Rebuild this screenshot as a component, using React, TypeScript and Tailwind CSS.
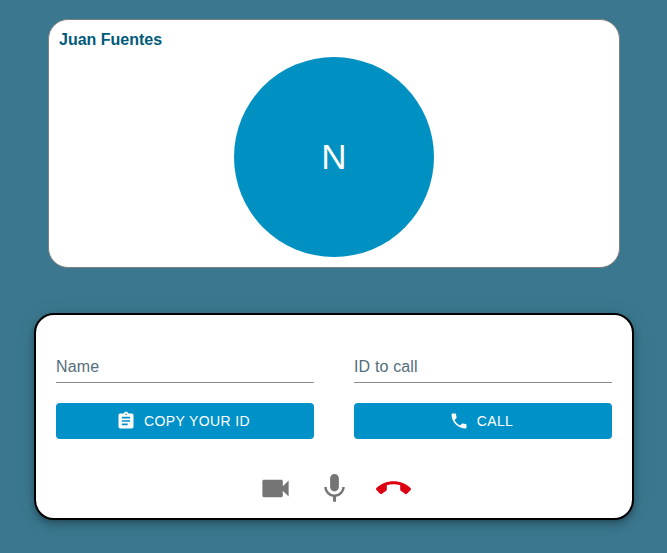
import type { ReactNode } from 'react';
import { MdAssignment, MdVideocam } from 'react-icons/md';

function Icon({ path, className = '' }: { path: string; className?: string }) {
  return (
    <svg viewBox="0 0 24 24" className={`size-[1em] fill-current ${className}`} aria-hidden="true">
      <path d={path} />
    </svg>
  );
}

const phonePath =
  'M6.62 10.79c1.44 2.83 3.76 5.14 6.59 6.59l2.2-2.2c.27-.27.67-.36 1.02-.24 1.12.37 2.33.57 3.57.57.55 0 1 .45 1 1V20c0 .55-.45 1-1 1-9.39 0-17-7.61-17-17 0-.55.45-1 1-1h3.5c.55 0 1 .45 1 1 0 1.25.2 2.45.57 3.57.11.35.03.74-.25 1.02l-2.2 2.2z';
const micPath =
  'M12 14c1.66 0 2.99-1.34 2.99-3L15 5c0-1.66-1.34-3-3-3S9 3.34 9 5v6c0 1.66 1.34 3 3 3zm5.3-3c0 3-2.54 5.1-5.3 5.1S6.7 14 6.7 11H5c0 3.41 2.72 6.23 6 6.72V21h2v-3.28c3.28-.48 6-3.3 6-6.72h-1.7z';
const callEndPath =
  'M12 9c-1.6 0-3.15.25-4.6.72v3.1c0 .39-.23.74-.56.9-.98.49-1.87 1.12-2.66 1.85-.18.18-.43.28-.7.28-.28 0-.53-.11-.71-.29L.29 13.08c-.18-.17-.29-.42-.29-.7 0-.28.11-.53.29-.71C3.34 8.78 7.46 7 12 7s8.66 1.78 11.71 4.67c.18.18.29.43.29.71 0 .28-.11.53-.29.71l-2.48 2.48c-.18.18-.43.29-.71.29-.27 0-.52-.11-.7-.28-.79-.74-1.69-1.36-2.67-1.85-.33-.16-.56-.5-.56-.9v-3.1C15.15 9.25 13.6 9 12 9z';

function Field({ label }: { label: string }) {
  return (
    <label className="flex h-8 items-start border-b border-[#8b8b8b] pt-[5px] text-[16px] leading-[22px] tracking-[0.15px] text-[#546e7a]">
      {label}
    </label>
  );
}

function ActionButton({ icon, children }: { icon: ReactNode; children: ReactNode }) {
  return (
    <button className="mt-5 flex h-9 w-full items-center justify-center rounded bg-[#0091c8] text-[14px] leading-6 tracking-[0.4px] text-white">
      <span className="mr-2 -ml-1 text-[20px]">{icon}</span>
      {children}
    </button>
  );
}

export default function App() {
  return (
    <main className="flex h-[553px] w-[667px] flex-col items-center overflow-hidden bg-[#3b788f] pt-[19px] font-['Liberation_Sans',Arial,sans-serif]">
      <section className="ml-px flex h-[249px] w-[572px] flex-col rounded-[20px] border border-[#808080] bg-white p-[10px]">
        <h5 className="h-[27px] text-[16px] leading-[19px] font-bold text-[#005a7a]">Juan Fuentes</h5>
        <div className="flex size-[200px] shrink-0 items-center justify-center self-center rounded-full bg-[#0091c2] text-[35px] text-white">
          N
        </div>
      </section>
      <section className="mt-[45px] ml-px h-[207px] w-[600px] rounded-[20px] border-2 border-black bg-white px-5 pt-9 shadow-[0px_3px_5px_-1px_rgba(0,0,0,0.2),0px_6px_10px_0px_rgba(0,0,0,0.14),0px_1px_18px_0px_rgba(0,0,0,0.12)]">
        <div className="grid grid-cols-2 gap-10">
          <div>
            <Field label="Name" />
            <ActionButton icon={<MdAssignment />}>COPY YOUR ID</ActionButton>
          </div>
          <div>
            <Field label="ID to call" />
            <ActionButton icon={<Icon path={phonePath} />}>CALL</ActionButton>
          </div>
        </div>
        <div className="mt-8 flex justify-center gap-6 text-[35px] text-[#757575]">
          <MdVideocam />
          <Icon path={micPath} />
          <Icon path={callEndPath} className="text-[#dc0012]" />
        </div>
      </section>
    </main>
  );
}
